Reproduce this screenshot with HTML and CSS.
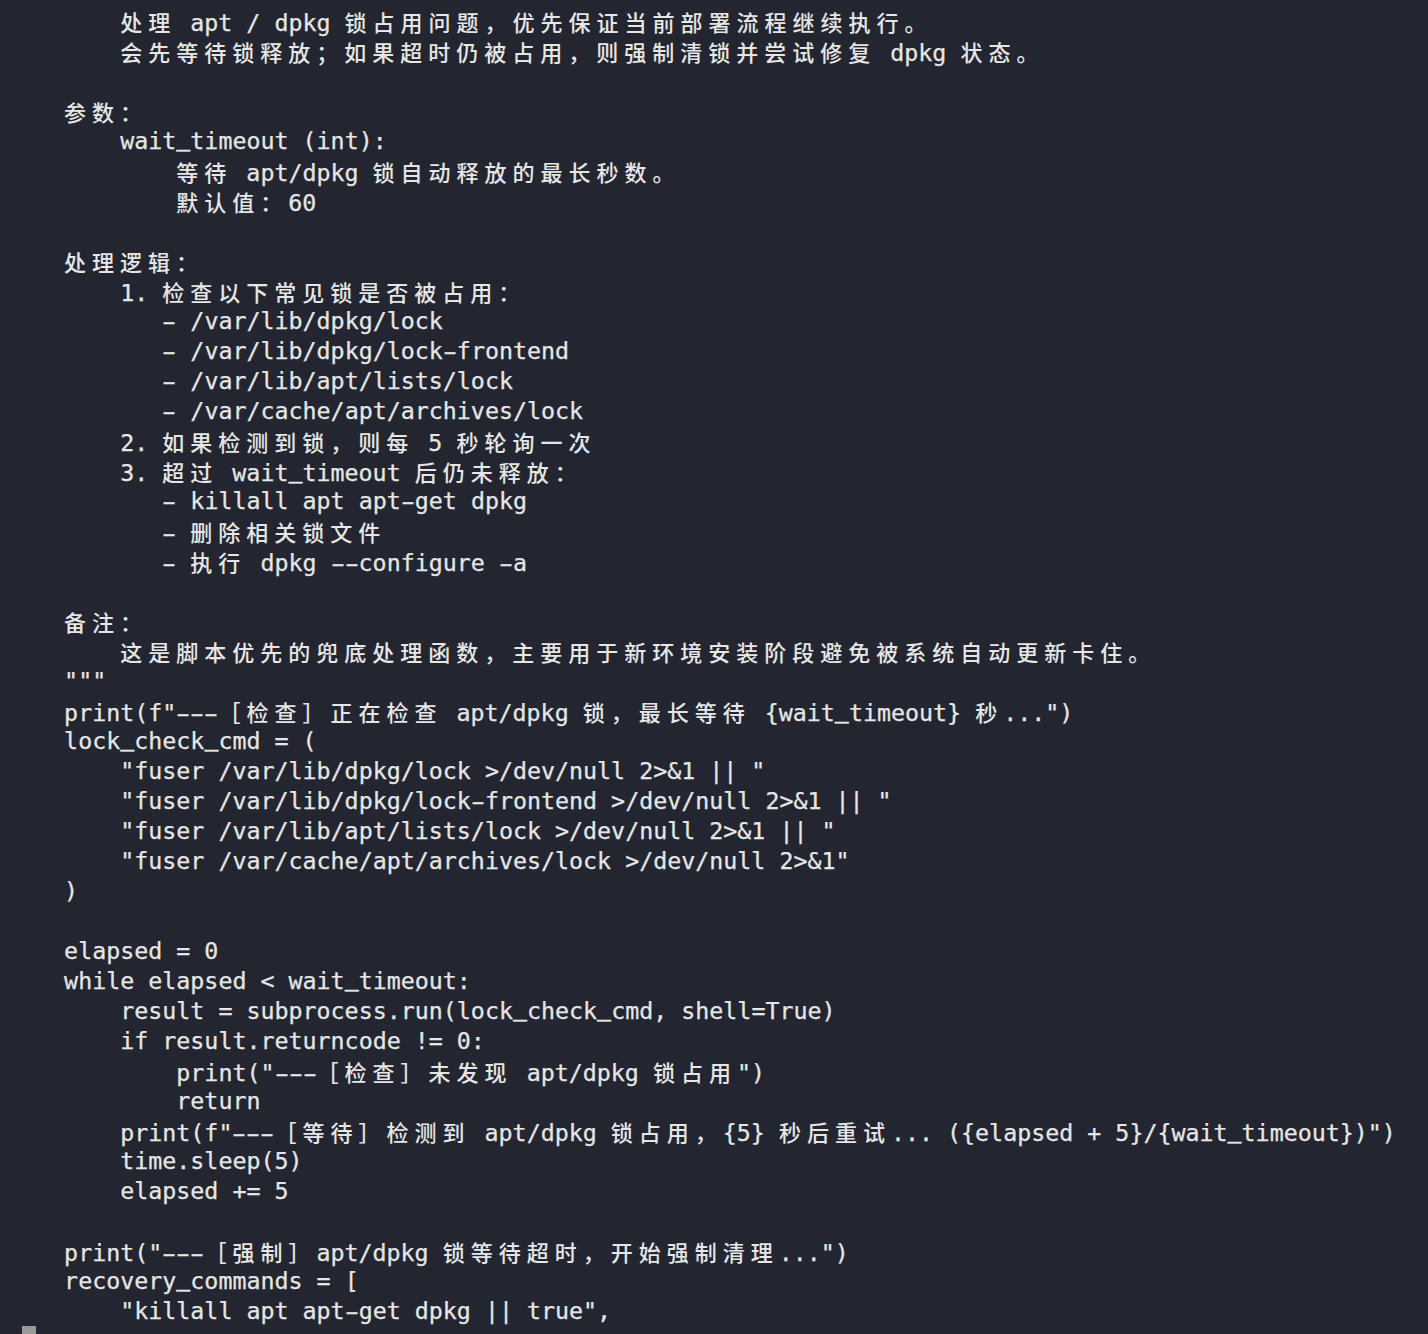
FILE: index.html
```html
<!DOCTYPE html>
<html lang="zh-CN">
<head>
<meta charset="utf-8">
<title>terminal</title>
<link rel="stylesheet" href="styles.css">
</head>
<body>
<div class="term">
<div class="ln">        <span class="c">处理</span> apt / dpkg <span class="c">锁占用问题，优先保证当前部署流程继续执行。</span></div>
<div class="ln">        <span class="c">会先等待锁释放；如果超时仍被占用，则强制清锁并尝试修复</span> dpkg <span class="c">状态。</span></div>
<div class="ln"></div>
<div class="ln">    <span class="c">参数：</span></div>
<div class="ln">        wait<span class="u">_</span>timeout (int):</div>
<div class="ln">            <span class="c">等待</span> apt/dpkg <span class="c">锁自动释放的最长秒数。</span></div>
<div class="ln">            <span class="c">默认值：</span>60</div>
<div class="ln"></div>
<div class="ln">    <span class="c">处理逻辑：</span></div>
<div class="ln">        1. <span class="c">检查以下常见锁是否被占用：</span></div>
<div class="ln">           <span class="d">-</span> /var/lib/dpkg/lock</div>
<div class="ln">           <span class="d">-</span> /var/lib/dpkg/lock<span class="d">-</span>frontend</div>
<div class="ln">           <span class="d">-</span> /var/lib/apt/lists/lock</div>
<div class="ln">           <span class="d">-</span> /var/cache/apt/archives/lock</div>
<div class="ln">        2. <span class="c">如果检测到锁，则每</span> 5 <span class="c">秒轮询一次</span></div>
<div class="ln">        3. <span class="c">超过</span> wait<span class="u">_</span>timeout <span class="c">后仍未释放：</span></div>
<div class="ln">           <span class="d">-</span> killall apt apt<span class="d">-</span>get dpkg</div>
<div class="ln">           <span class="d">-</span> <span class="c">删除相关锁文件</span></div>
<div class="ln">           <span class="d">-</span> <span class="c">执行</span> dpkg <span class="d">-</span><span class="d">-</span>configure <span class="d">-</span>a</div>
<div class="ln"></div>
<div class="ln">    <span class="c">备注：</span></div>
<div class="ln">        <span class="c">这是脚本优先的兜底处理函数，主要用于新环境安装阶段避免被系统自动更新卡住。</span></div>
<div class="ln">    """</div>
<div class="ln">    print(f"<span class="d">-</span><span class="d">-</span><span class="d">-</span><span class="c">［检查］正在检查</span> apt/dpkg <span class="c">锁，最长等待</span> {wait<span class="u">_</span>timeout} <span class="c">秒</span>...")</div>
<div class="ln">    lock<span class="u">_</span>check<span class="u">_</span>cmd = (</div>
<div class="ln">        "fuser /var/lib/dpkg/lock &gt;/dev/null 2&gt;&amp;1 || "</div>
<div class="ln">        "fuser /var/lib/dpkg/lock<span class="d">-</span>frontend &gt;/dev/null 2&gt;&amp;1 || "</div>
<div class="ln">        "fuser /var/lib/apt/lists/lock &gt;/dev/null 2&gt;&amp;1 || "</div>
<div class="ln">        "fuser /var/cache/apt/archives/lock &gt;/dev/null 2&gt;&amp;1"</div>
<div class="ln">    )</div>
<div class="ln"></div>
<div class="ln">    elapsed = 0</div>
<div class="ln">    while elapsed &lt; wait<span class="u">_</span>timeout:</div>
<div class="ln">        result = subprocess.run(lock<span class="u">_</span>check<span class="u">_</span>cmd, shell=True)</div>
<div class="ln">        if result.returncode != 0:</div>
<div class="ln">            print("<span class="d">-</span><span class="d">-</span><span class="d">-</span><span class="c">［检查］未发现</span> apt/dpkg <span class="c">锁占用</span>")</div>
<div class="ln">            return</div>
<div class="ln">        print(f"<span class="d">-</span><span class="d">-</span><span class="d">-</span><span class="c">［等待］检测到</span> apt/dpkg <span class="c">锁占用，</span>{5} <span class="c">秒后重试</span>... ({elapsed + 5}/{wait<span class="u">_</span>timeout})")</div>
<div class="ln">        time.sleep(5)</div>
<div class="ln">        elapsed += 5</div>
<div class="ln"></div>
<div class="ln">    print("<span class="d">-</span><span class="d">-</span><span class="d">-</span><span class="c">［强制］</span>apt/dpkg <span class="c">锁等待超时，开始强制清理</span>...")</div>
<div class="ln">    recovery<span class="u">_</span>commands = [</div>
<div class="ln">        "killall apt apt<span class="d">-</span>get dpkg || true",</div>
<div class="ln"> <span class="cursor"></span></div>
</div>
</body>
</html>
```
FILE: styles.css
```css
html, body {
  margin: 0;
  padding: 0;
  height: 1334px;
  overflow: hidden;
  background: #232631;
}
.term {
  padding: 6px 0 0 8px;
  color: #e6e6e6;
  font-family: "DejaVu Sans Mono", monospace;
  font-size: 23.3px;
  line-height: 30px;
  -webkit-text-stroke: 0.25px currentColor;
}
.ln {
  height: 30px;
  white-space: pre;
}
.c {
  font-family: "Noto Sans CJK SC", sans-serif;
  font-size: 22px;
  font-weight: 500;
  letter-spacing: 6px;
  -webkit-text-stroke: 0;
}
.d {
  display: inline-block;
  transform: scaleX(1.75);
}
.u {
  display: inline-block;
  transform-origin: 50% 28px;
  transform: translateY(-3.5px) scaleY(1.5);
}
.cursor {
  display: inline-block;
  width: 14px;
  height: 30px;
  vertical-align: top;
  background: #9a9a9a;
}
```
